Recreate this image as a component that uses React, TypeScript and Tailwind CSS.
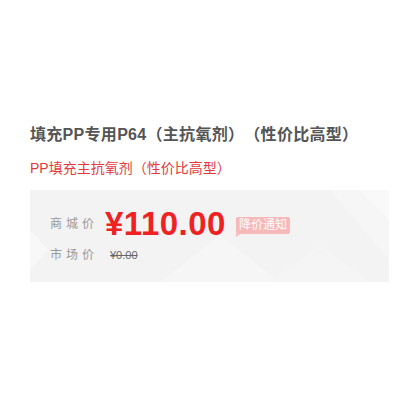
import React from "react";

export default function App() {
  return (
    <div className="w-[400px] h-[400px] bg-white pl-[30px] pr-[11px] pt-[123px] [text-spacing-trim:space-all]" style={{ fontFamily: '"Liberation Sans", "Noto Sans CJK SC", sans-serif' }}>
      <div className="text-[16px] leading-[24px] font-bold text-[#555] tracking-[0.3px]">填充PP专用P64（主抗氧剂）（性价比高型）</div>
      <div className="mt-[11px] text-[14px] leading-[20px] text-[#e4393c]">PP填充主抗氧剂（性价比高型）</div>
      <div className="relative mt-[12px] h-[92px] w-[359px] overflow-hidden bg-[#f3f3f3]">
        <svg className="absolute inset-0" width="359" height="92" viewBox="0 0 359 92">
          <polygon points="0,40 18,60 0,80" fill="#f8f8f8" />
          <polygon points="300,0 359,0 359,70" fill="#f6f6f6" />
          <polygon points="330,0 359,30 359,0" fill="#f9f9f9" />
          <polygon points="130,92 190,45 250,92" fill="#f6f6f6" />
          <polygon points="240,92 290,55 340,92" fill="#f5f5f5" />
        </svg>
        <div className="relative flex flex-col pl-[20px] pt-[16px]">
          <div className="flex items-center h-[36px]">
            <span className="w-[55px] text-[12px] tracking-[4px] text-[#999]">商城价</span>
            <span className="text-[33px] leading-[36px] font-bold text-[#e22] tracking-[0.5px]">¥110.00</span>
            <span className="relative ml-[10px] mt-[2px] px-[3px] h-[17px] leading-[17px] text-[12px] text-white bg-[#f6b8b8] rounded-[2px]">
              降价通知
              <span className="absolute left-0 bottom-[-3px] w-0 h-0 border-t-[3px] border-t-[#f6b8b8] border-r-[4px] border-r-transparent" />
            </span>
          </div>
          <div className="flex items-center mt-[4px] h-[18px]">
            <span className="w-[60px] text-[12px] tracking-[4px] text-[#999]">市场价</span>
            <span className="text-[11px] text-[#666] line-through">¥0.00</span>
          </div>
        </div>
      </div>
    </div>
  );
}
